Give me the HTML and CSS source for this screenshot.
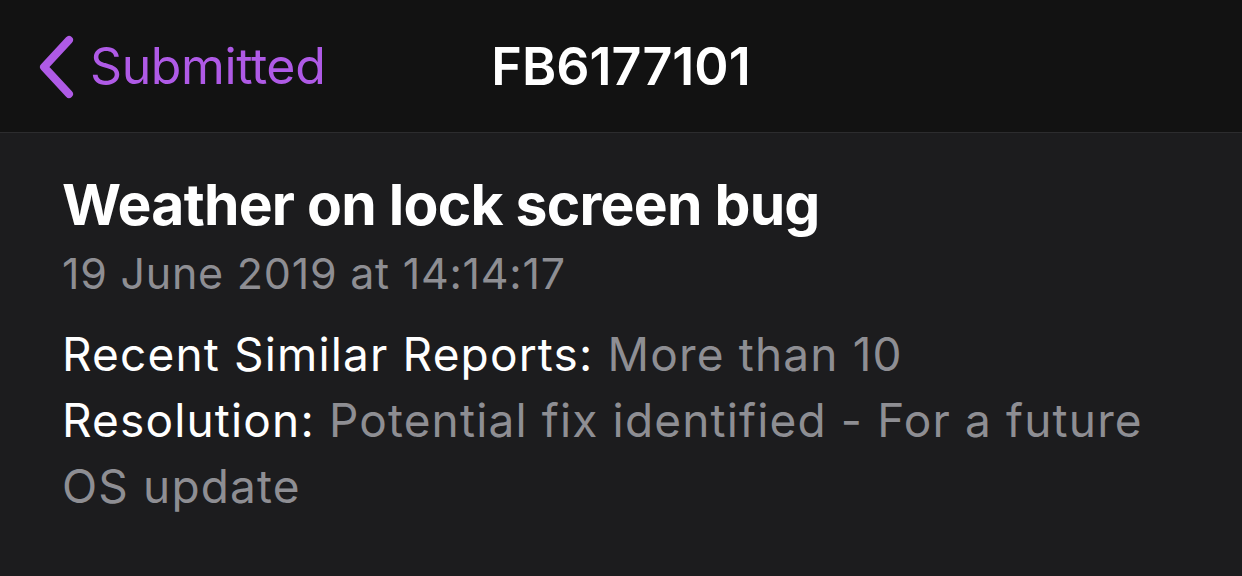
FILE: index.html
```html
<!DOCTYPE html>
<html lang="en">
<head>
  <meta charset="UTF-8" />
  <title>FB6177101</title>
  <link rel="stylesheet" href="styles.css">
</head>
<body>

  <header class="navbar">
    <a class="back" href="#">
      <svg class="chevron" viewBox="0 0 40 66" width="40" height="66" aria-hidden="true">
        <path d="M33 6 L8 33 L33 60" fill="none" stroke="currentColor" stroke-width="8" stroke-linecap="round" stroke-linejoin="round"/>
      </svg>
      <span>Submitted</span>
    </a>
    <h1 class="nav-title">FB6177101</h1>
  </header>

  <main class="report">
    <h2 class="report-title">Weather on lock screen bug</h2>
    <p class="report-date">19 June 2019 at 14:14:17</p>

    <div class="report-info">
      <p>Recent Similar Reports: <span class="muted">More than 10</span></p>
      <p>Resolution: <span class="muted">Potential fix identified - For a future OS update</span></p>
    </div>
  </main>

</body>
</html>
```

FILE: styles.css
```css
/* Reset */
* {
  box-sizing: border-box;
}

body {
  margin: 0;
  font-family: Inter, 'Noto Sans', sans-serif;
  background: #1c1c1e;
  color: #fff;
  height: 576px;
  overflow: hidden;
}

/* Top bar */
.navbar {
  position: relative;
  height: 133px;
  background: #121212;
  border-bottom: 1px solid #2c2c2e;
  display: flex;
  align-items: center;
  padding-left: 36px;
}

.back {
  display: flex;
  align-items: center;
  gap: 14px;
  color: #af5ae6;
  text-decoration: none;
  font-size: 50px;
  letter-spacing: -0.4px;
}

.chevron {
  display: block;
  margin-top: 2px;
}

.nav-title {
  position: absolute;
  left: 0;
  right: 0;
  top: 0;
  bottom: 0;
  margin: 0;
  display: flex;
  align-items: center;
  justify-content: center;
  font-size: 52px;
  font-weight: 600;
  pointer-events: none;
}

/* Report body */
.report {
  padding: 32px 62px 0;
}

.report-title {
  margin: 0;
  font-size: 57px;
  font-weight: 700;
  line-height: 80px;
  letter-spacing: -0.75px;
}

.report-date {
  margin: 0;
  font-size: 43px;
  line-height: 56px;
  letter-spacing: 0.75px;
  color: #8e8e93;
}

.report-info {
  margin-top: 20px;
  font-size: 46px;
  line-height: 66px;
  letter-spacing: 1.15px;
  max-width: 1130px;
}

.report-info p {
  margin: 0;
}

.muted {
  color: #8e8e93;
}
```
